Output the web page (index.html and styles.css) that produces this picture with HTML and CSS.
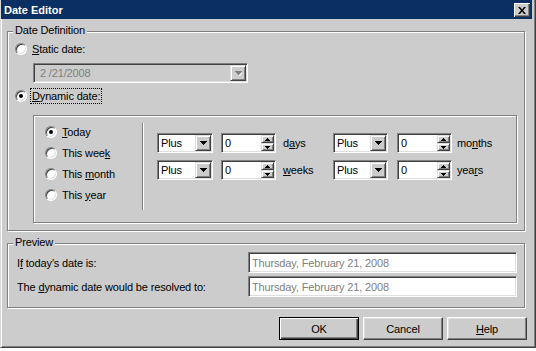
FILE: index.html
```html
<!DOCTYPE html>
<html>
<head>
<meta charset="utf-8">
<title>Date Editor</title>
<link rel="stylesheet" href="styles.css">
</head>
<body>
<div class="window">
  <div class="titlebar">
    <span class="title">Date Editor</span>
    <span class="close"><svg width="8" height="7" viewBox="0 0 8 7"><path d="M0 0h2l2 2.4 2-2.4h2l-3 3.5 3 3.5h-2l-2-2.4-2 2.4h-2l3-3.5z" fill="#000"/></svg></span>
  </div>
  <div class="client">
    <div class="group def">
      <span class="legend">Date Definition</span>
      <div class="opt first"><span class="radio"></span><span class="lbl"><u>S</u>tatic date:</span></div>
      <div class="combo disabled wide">
        <span class="val">2 /21/2008</span>
        <span class="dd"><svg width="7" height="5" viewBox="0 0 7 5"><path d="M0 0h7v1h-1v1h-1v1h-1v1h-1v-1h-1v-1h-1v-1h-1z" fill="#808080"/><path d="M4 4h1v-1h1v-1h1v1h-1v1h-1v1h-1z" fill="#fff"/></svg></span>
      </div>
      <div class="opt"><span class="radio on"></span><span class="lbl focus"><u>D</u>ynamic date:</span></div>
      <div class="inner">
        <div class="periods">
          <div class="opt prow"><span class="radio on"></span><span class="lbl"><u>T</u>oday</span></div>
          <div class="opt prow"><span class="radio"></span><span class="lbl">This wee<u>k</u></span></div>
          <div class="opt prow"><span class="radio"></span><span class="lbl">This <u>m</u>onth</span></div>
          <div class="opt prow"><span class="radio"></span><span class="lbl">This <u>y</u>ear</span></div>
        </div>
        <div class="sep"></div>
        <div class="offsets">
          <div class="orow">
            <div class="combo small"><span class="val">Plus</span><span class="dd"><svg width="7" height="4" viewBox="0 0 7 4"><path d="M0 0h7v1h-1v1h-1v1h-1v1h-1v-1h-1v-1h-1v-1h-1z" fill="#000"/></svg></span></div>
            <div class="spin"><span class="val">0</span><span class="spinbtns"><span class="sb"><svg width="5" height="3" viewBox="0 0 5 3"><path d="M2 0h1v1h1v1h1v1h-5v-1h1v-1h1z" fill="#000"/></svg></span><span class="sb"><svg width="5" height="3" viewBox="0 0 5 3"><path d="M0 0h5v1h-1v1h-1v1h-1v-1h-1v-1h-1z" fill="#000"/></svg></span></span></div>
            <span class="unit">d<u>a</u>ys</span>
            <div class="combo small second"><span class="val">Plus</span><span class="dd"><svg width="7" height="4" viewBox="0 0 7 4"><path d="M0 0h7v1h-1v1h-1v1h-1v1h-1v-1h-1v-1h-1v-1h-1z" fill="#000"/></svg></span></div>
            <div class="spin spin2"><span class="val">0</span><span class="spinbtns"><span class="sb"><svg width="5" height="3" viewBox="0 0 5 3"><path d="M2 0h1v1h1v1h1v1h-5v-1h1v-1h1z" fill="#000"/></svg></span><span class="sb"><svg width="5" height="3" viewBox="0 0 5 3"><path d="M0 0h5v1h-1v1h-1v1h-1v-1h-1v-1h-1z" fill="#000"/></svg></span></span></div>
            <span class="unit unit2">mo<u>n</u>ths</span>
          </div>
          <div class="orow">
            <div class="combo small"><span class="val">Plus</span><span class="dd"><svg width="7" height="4" viewBox="0 0 7 4"><path d="M0 0h7v1h-1v1h-1v1h-1v1h-1v-1h-1v-1h-1v-1h-1z" fill="#000"/></svg></span></div>
            <div class="spin"><span class="val">0</span><span class="spinbtns"><span class="sb"><svg width="5" height="3" viewBox="0 0 5 3"><path d="M2 0h1v1h1v1h1v1h-5v-1h1v-1h1z" fill="#000"/></svg></span><span class="sb"><svg width="5" height="3" viewBox="0 0 5 3"><path d="M0 0h5v1h-1v1h-1v1h-1v-1h-1v-1h-1z" fill="#000"/></svg></span></span></div>
            <span class="unit"><u>w</u>eeks</span>
            <div class="combo small second"><span class="val">Plus</span><span class="dd"><svg width="7" height="4" viewBox="0 0 7 4"><path d="M0 0h7v1h-1v1h-1v1h-1v1h-1v-1h-1v-1h-1v-1h-1z" fill="#000"/></svg></span></div>
            <div class="spin spin2"><span class="val">0</span><span class="spinbtns"><span class="sb"><svg width="5" height="3" viewBox="0 0 5 3"><path d="M2 0h1v1h1v1h1v1h-5v-1h1v-1h1z" fill="#000"/></svg></span><span class="sb"><svg width="5" height="3" viewBox="0 0 5 3"><path d="M0 0h5v1h-1v1h-1v1h-1v-1h-1v-1h-1z" fill="#000"/></svg></span></span></div>
            <span class="unit unit2">yea<u>r</u>s</span>
          </div>
        </div>
      </div>
    </div>
    <div class="group preview">
      <span class="legend">Preview</span>
      <div class="prev-row">
        <span class="plabel">I<u>f</u> today's date is:</span>
        <span class="tb">Thursday, February 21, 2008</span>
      </div>
      <div class="prev-row">
        <span class="plabel">The <u>d</u>ynamic date would be resolved to:</span>
        <span class="tb">Thursday, February 21, 2008</span>
      </div>
    </div>
    <div class="buttons">
      <span class="btn default">OK</span>
      <span class="btn">Cancel</span>
      <span class="btn"><u>H</u>elp</span>
    </div>
  </div>
</div>
</body>
</html>
```
FILE: styles.css
```css
* { box-sizing: border-box; }
body {
  margin: 0;
  background: #fff;
  font-family: "Liberation Sans", Arial, sans-serif;
  font-size: 11px;
  letter-spacing: -0.15px;
  color: #000;
}
u { text-decoration: underline; text-underline-offset: 1px; }
svg { display: block; }

.window {
  width: 536px;
  height: 348px;
  background: #cccccc;
  border-left: 1px solid #d8d8d8;
  border-right: 1px solid #404040;
  border-bottom: 1px solid #404040;
  box-shadow: inset 1px 0 #fff, inset -1px -1px #808080;
  padding-right: 3px;
}

.titlebar {
  height: 19px;
  background: #0a2f62;
  display: flex;
  justify-content: space-between;
  align-items: flex-start;
  padding: 0 2px 0 3px;
}
.title {
  color: #fff;
  font-weight: bold;
  letter-spacing: 0;
  line-height: 13px;
  margin-top: 4px;
}
.close {
  margin-top: 3px;
  width: 16px;
  height: 14px;
  background: #cccccc;
  display: flex;
  align-items: center;
  justify-content: center;
  box-shadow: inset 1px 1px #fff, inset -1px -1px #404040, inset -2px -2px #808080;
}

.client { padding: 12px 7px 0 6px; }

.group {
  position: relative;
  border: 1px solid #808080;
  box-shadow: inset 1px 1px #fff, 1px 1px #fff;
}
.legend {
  position: absolute;
  top: -9px;
  left: 5px;
  padding: 0 2px;
  background: #cccccc;
  line-height: 14px;
}

.def { height: 200px; padding: 9px 0 0 7px; }

.opt { display: flex; align-items: center; height: 16px; }
.radio {
  flex: none;
  position: relative;
  width: 12px;
  height: 12px;
  margin-right: 5px;
  border-radius: 50%;
  background: #fff;
  border: 1px solid;
  border-color: #808080 #fff #fff #808080;
  box-shadow: inset 1px 1px #404040, inset -1px -1px #dfdfdf;
}
.radio.on::after {
  content: "";
  position: absolute;
  left: 3px;
  top: 3px;
  width: 4px;
  height: 4px;
  border-radius: 50%;
  background: #000;
}
.lbl { line-height: 14px; white-space: nowrap; }
.lbl.focus { outline: 1px dotted #000; outline-offset: 0; padding: 0 1px; margin-left: -1px; }

.combo {
  height: 20px;
  display: flex;
  align-items: center;
  background: #fff;
  border: 1px solid;
  border-color: #808080 #fff #fff #808080;
  box-shadow: inset 1px 1px #404040, inset -1px -1px #dfdfdf;
  padding: 1px;
}
.combo .val, .spin .val {
  flex: 1;
  padding-left: 2px;
  line-height: 16px;
  white-space: nowrap;
  overflow: hidden;
}
.combo.disabled { background: #cccccc; color: #808080; }
.combo.wide { width: 215px; margin: 6px 0 5px 18px; }
.combo.wide .val { padding-left: 5px; }
.combo.small { width: 56px; }
.combo.small.second { width: 55px; }

.dd {
  flex: none;
  width: 16px;
  height: 16px;
  background: #cccccc;
  border: 1px solid;
  border-color: #dfdfdf #404040 #404040 #dfdfdf;
  box-shadow: inset 1px 1px #fff, inset -1px -1px #808080;
  display: flex;
  align-items: center;
  justify-content: center;
}

.inner {
  width: 484px;
  height: 108px;
  margin: 11px 0 0 18px;
  border: 1px solid #808080;
  box-shadow: inset 1px 1px #fff, 1px 1px #fff;
  display: flex;
}
.periods { width: 108px; padding: 5px 0 0 11px; }
.prow { height: 21px; }
.sep {
  width: 2px;
  height: 87px;
  margin-top: 7px;
  border-left: 1px solid #808080;
  border-right: 1px solid #fff;
}
.offsets {
  margin: 17px 0 0 13px;
  display: flex;
  flex-direction: column;
  gap: 7px;
}
.orow { display: flex; align-items: center; height: 20px; }

.spin {
  width: 55px;
  height: 20px;
  margin-left: 8px;
  display: flex;
  background: #fff;
  border: 1px solid;
  border-color: #808080 #fff #fff #808080;
  box-shadow: inset 1px 1px #404040, inset -1px -1px #dfdfdf;
  padding: 1px;
}
.spin2 { margin-left: 9px; }
.spinbtns { flex: none; width: 13px; display: flex; flex-direction: column; }
.sb {
  height: 8px;
  background: #cccccc;
  border: 1px solid;
  border-color: #dfdfdf #404040 #404040 #dfdfdf;
  box-shadow: inset 1px 1px #fff, inset -1px -1px #808080;
  display: flex;
  align-items: center;
  justify-content: center;
}
.unit { width: 57px; padding-left: 7px; white-space: nowrap; }
.unit2 { width: auto; padding-left: 5px; }

.preview { height: 65px; margin-top: 12px; padding: 8px 7px 0 9px; }
.prev-row { display: flex; align-items: center; height: 21px; }
.prev-row + .prev-row { margin-top: 3px; }
.plabel { flex: 1; white-space: nowrap; }
.tb {
  width: 269px;
  height: 21px;
  display: flex;
  align-items: center;
  background: #fff;
  color: #808080;
  border: 1px solid;
  border-color: #808080 #fff #fff #808080;
  box-shadow: inset 1px 1px #404040, inset -1px -1px #dfdfdf;
  padding-left: 3px;
  white-space: nowrap;
}

.buttons {
  display: flex;
  justify-content: flex-end;
  gap: 4px;
  margin: 9px -2px 0 0;
}
.btn {
  width: 80px;
  height: 23px;
  display: flex;
  align-items: center;
  justify-content: center;
  background: #cccccc;
  border: 1px solid;
  border-color: #fff #404040 #404040 #fff;
  box-shadow: inset -1px -1px #808080, inset 1px 1px #dfdfdf;
}
.btn.default {
  border-color: #000;
  box-shadow: inset 1px 1px #fff, inset -1px -1px #404040, inset -2px -2px #808080;
}
```
